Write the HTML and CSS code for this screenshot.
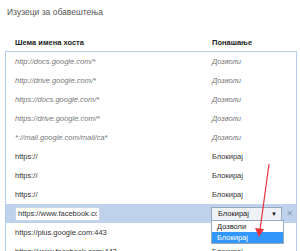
FILE: index.html
```html
<!DOCTYPE html>
<html>
<head>
  <meta charset="UTF-8">
  <title>Изузеци за обавештења</title>
  <link rel="stylesheet" href="styles.css">
</head>
<body>
  <div class="page">
    <h1 class="title">Изузеци за обавештења</h1>

    <div class="list-head">
      <div class="col-host">Шема имена хоста</div>
      <div class="col-action">Понашање</div>
    </div>

    <div class="list">
      <div class="row rule"><div class="col-host">http://docs.google.com/*</div><div class="col-action">Дозволи</div></div>
      <div class="row rule"><div class="col-host">http://drive.google.com/*</div><div class="col-action">Дозволи</div></div>
      <div class="row rule"><div class="col-host">https://docs.google.com/*</div><div class="col-action">Дозволи</div></div>
      <div class="row rule"><div class="col-host">https://drive.google.com/*</div><div class="col-action">Дозволи</div></div>
      <div class="row rule"><div class="col-host">*://mail.google.com/mail/ca*</div><div class="col-action">Дозволи</div></div>
      <div class="row"><div class="col-host">https://</div><div class="col-action">Блокирај</div></div>
      <div class="row"><div class="col-host">https://</div><div class="col-action">Блокирај</div></div>
      <div class="row"><div class="col-host">https://</div><div class="col-action">Блокирај</div></div>

      <div class="row selected">
        <div class="col-host"><input class="host-input" type="text" value="https://www.facebook.com"></div>
        <div class="col-action">
          <div class="select">
            <span>Блокирај</span>
            <span class="caret">&#9660;</span>
            <div class="options">
              <div class="option">Дозволи</div>
              <div class="option active">Блокирај</div>
            </div>
          </div>
        </div>
        <div class="remove">&#215;</div>
      </div>

      <div class="row"><div class="col-host">https://plus.google.com:443</div><div class="col-action">Блокирај</div></div>
      <div class="row"><div class="col-host">https://www.facebook.com:443</div><div class="col-action">Блокирај</div></div>
    </div>

    <!-- red annotation arrow -->
    <svg class="arrow" width="300" height="251" viewBox="0 0 300 251">
      <line x1="269" y1="164" x2="260" y2="230" stroke="#e8333a" stroke-width="1.2"/>
      <polygon points="255,228 264,229 259,237" fill="#e8333a"/>
    </svg>
  </div>
</body>
</html>
```

FILE: styles.css
```css
body {
  margin: 0;
  font-family: "Liberation Sans", Arial, sans-serif;
  color: #333;
  background: white;
  overflow: hidden;
}
.page {
  position: relative;
  width: 300px;
  height: 251px;
}
.title {
  margin: 0;
  padding: 6px 0 0 7px;
  font-size: 8.5px;
  font-weight: normal;
  color: #555;
  line-height: 13px;
}
.list-head {
  display: flex;
  margin-top: 18px;
  padding-left: 15px;
  font-size: 7.5px;
  font-weight: bold;
  color: #222;
  line-height: 11px;
}
.list-head .col-host {
  width: 197px;
}
.list {
  margin: 3px 3px 0 5px;
  border: 1px solid #b5cdee;
  border-bottom: none;
}
.row {
  display: flex;
  align-items: center;
  height: 19px;
  padding-left: 9px;
  font-size: 7.5px;
  color: #333;
  position: relative;
}
.row .col-host {
  width: 197px;
}
.row .col-action {
  flex: 1;
}
.row.rule {
  color: #777;
  font-style: italic;
}
.row.selected {
  background: #bfd2ec;
  z-index: 1;
}
.host-input {
  width: 85px;
  height: 14px;
  box-sizing: border-box;
  margin: 0;
  padding: 0 2px;
  border: 1px solid #c9d6e8;
  font-family: inherit;
  font-size: 7.5px;
  color: #333;
  background: white;
  outline: none;
}
.select {
  position: relative;
  width: 71px;
  height: 14px;
  box-sizing: border-box;
  margin-left: -1px;
  border: 1px solid #9aa9bd;
  background: #eef1f5;
  display: flex;
  align-items: center;
  justify-content: space-between;
  padding: 0 4px 0 6px;
  font-size: 7.5px;
  color: #222;
}
.caret {
  font-size: 6px;
  color: #111;
}
.options {
  position: absolute;
  left: -1px;
  top: 100%;
  width: 71px;
  border: 1px solid #9aa9bd;
  background: white;
  font-size: 7.5px;
}
.option {
  height: 11px;
  line-height: 11px;
  padding-left: 5px;
  color: #222;
}
.option.active {
  background: #3297fd;
  color: white;
}
.remove {
  position: absolute;
  right: 3px;
  top: 3px;
  font-size: 11px;
  color: #8a97a8;
}
.arrow {
  position: absolute;
  left: 0;
  top: 0;
  z-index: 2;
  pointer-events: none;
}
```
